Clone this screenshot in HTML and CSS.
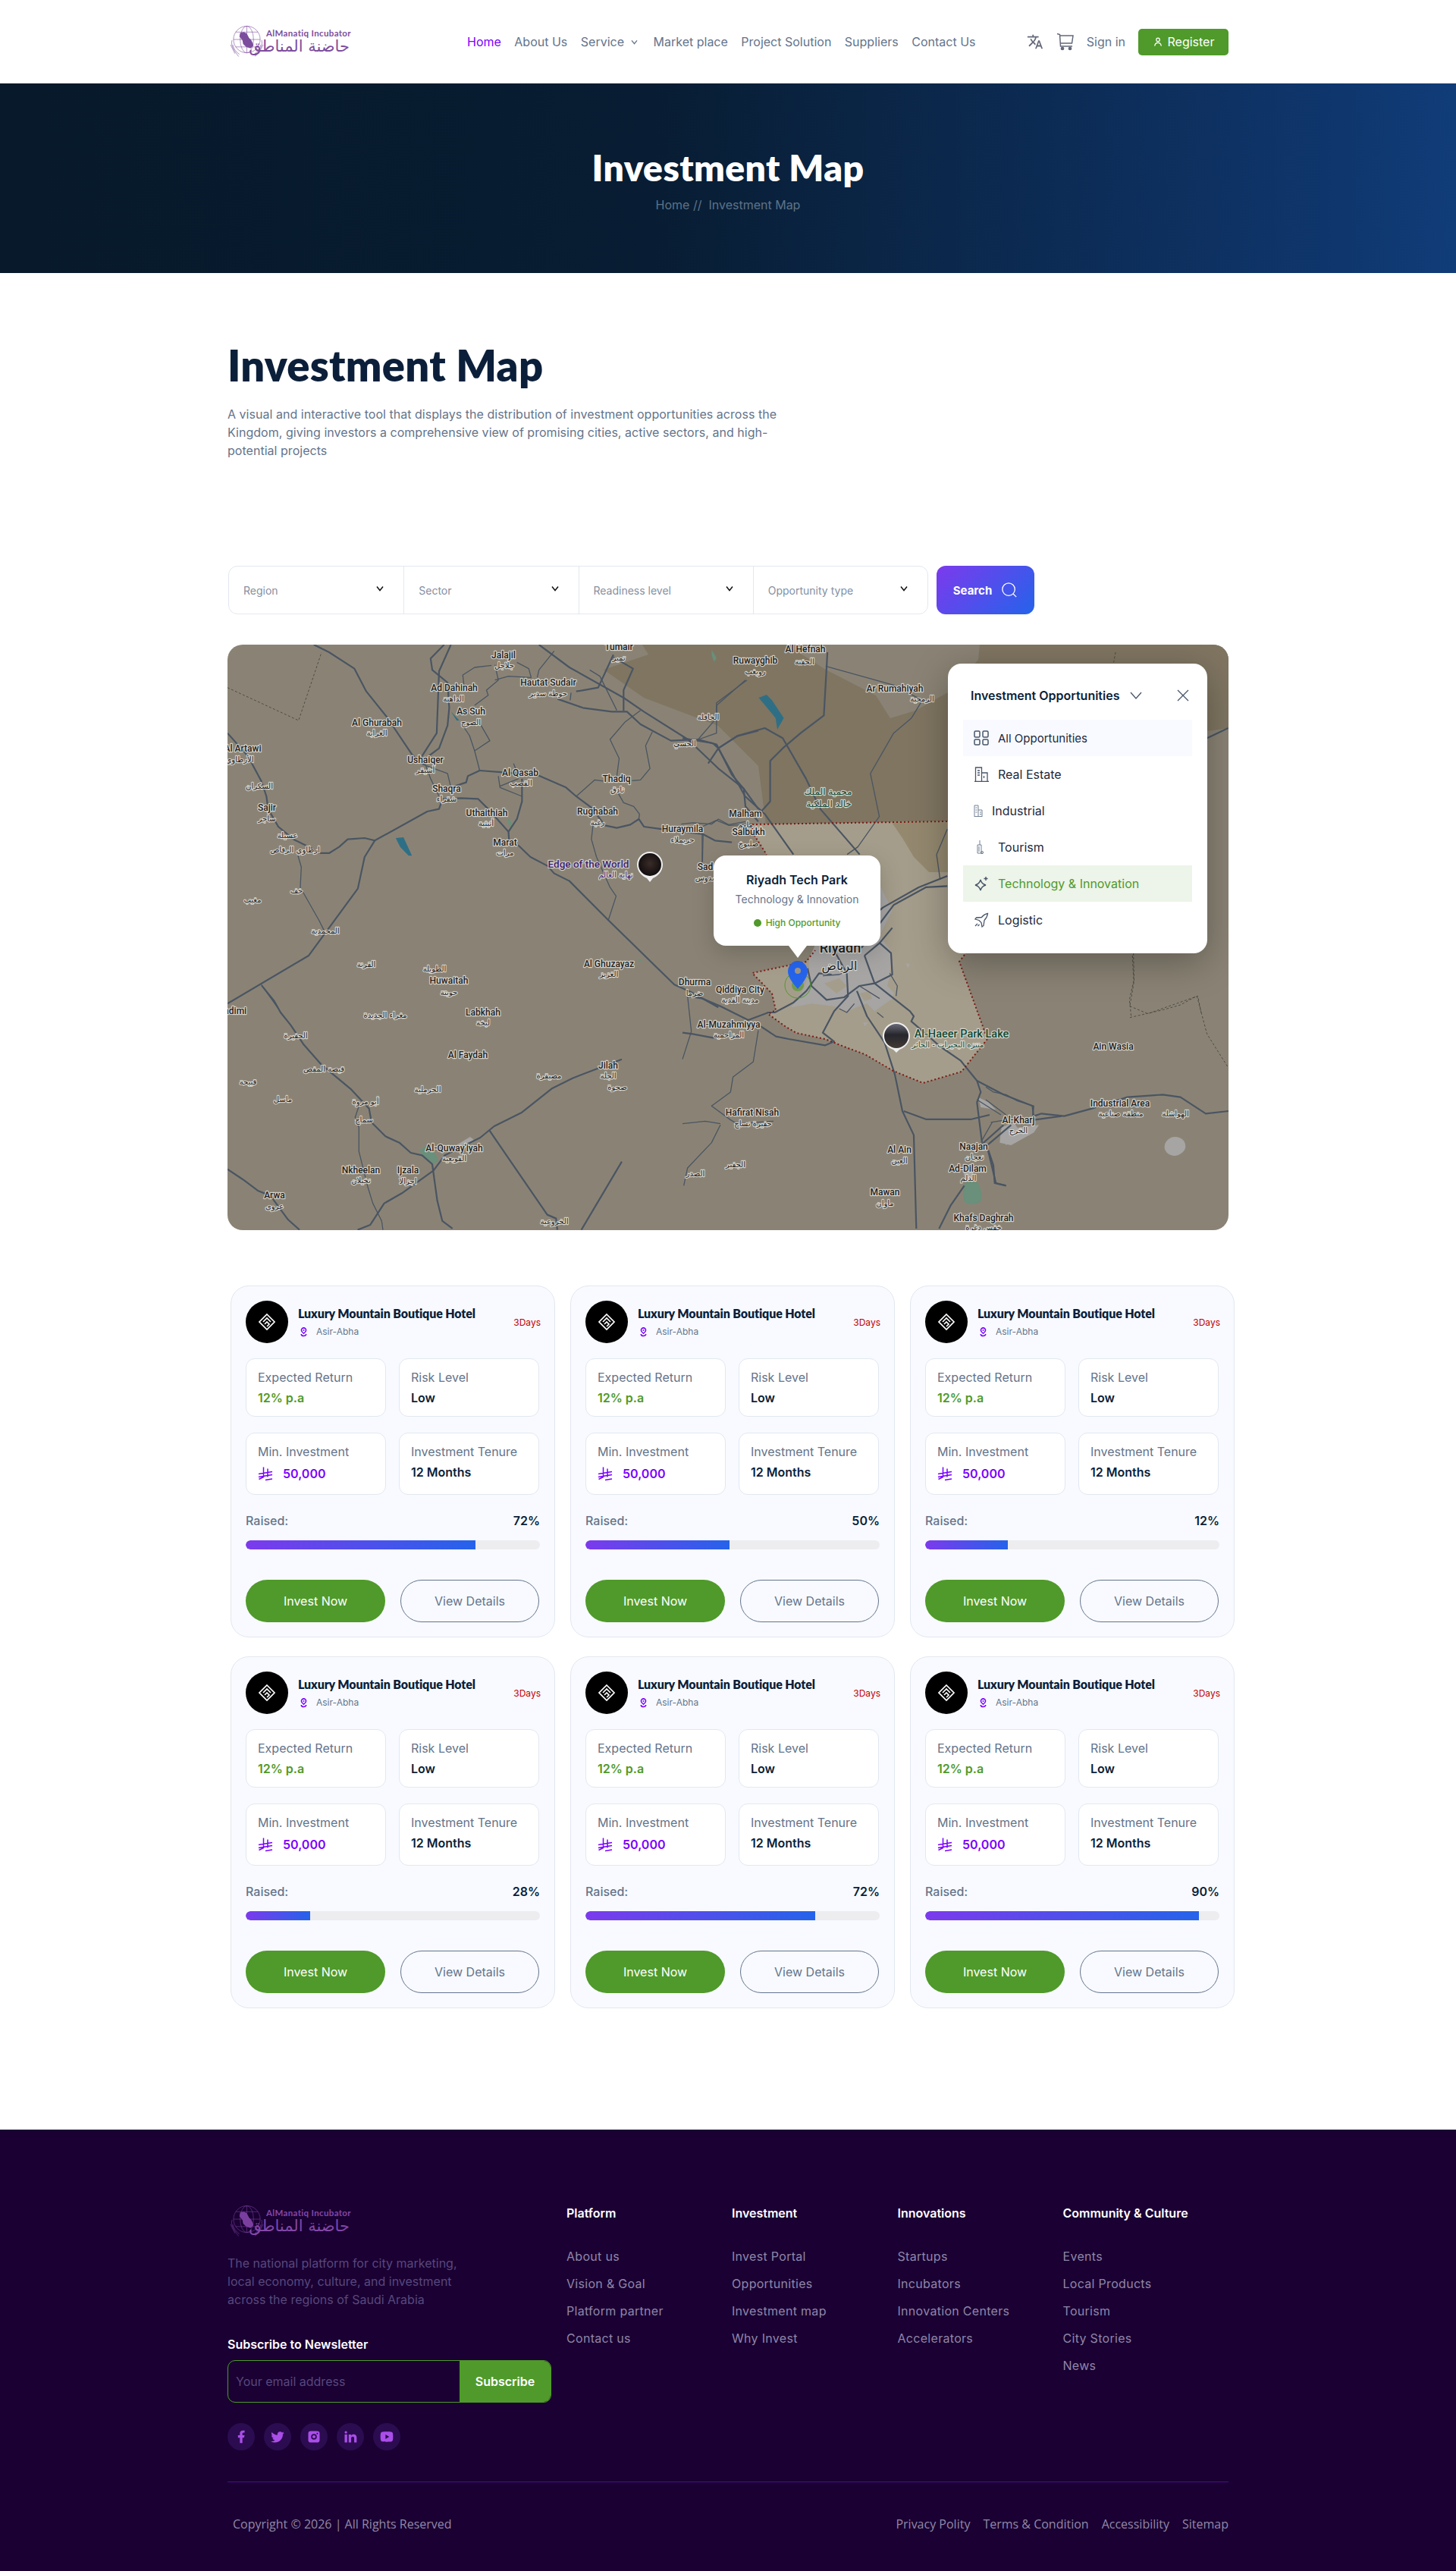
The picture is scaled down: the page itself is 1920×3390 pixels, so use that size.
FILE: index.html
```html
<!DOCTYPE html>
<html lang="en">
<head>
<meta charset="utf-8">
<title>Investment Map</title>
<link rel="stylesheet" href="styles.css">
</head>
<body>
<svg class="defs" width="0" height="0" aria-hidden="true">
  <symbol id="logo-mark" viewBox="0 0 46 44">
    <g fill="none" stroke="currentColor" stroke-width=".6">
      <circle cx="23" cy="19" r="18"/>
      <ellipse cx="23" cy="19" rx="9" ry="18"/>
      <path d="M23 1v36M5 19h36M8 9h30M8 29h30"/>
      <path d="M3 20c-2 8 3 14 9 22M4 26c1 6 5 10 9 13M43 20c2 8-3 14-9 22M42 26c-1 6-5 10-9 13M1 26l6 12M45 26l-6 12"/>
    </g>
    <path fill="currentColor" d="M14 10l5-1 4 2 3 6 3 3 2 4 1 3-4 4-6-2-4-4-1-5-4-5z"/>
  </symbol>
  <symbol id="card-mark" viewBox="0 0 24 24">
    <g fill="none" stroke="#fff" stroke-width="1.7">
      <path d="M12 2l10 10-10 10L2 12z"/>
      <path d="M7 12l5-5 5 5M9 15l3-3 3 3-3 3"/>
    </g>
  </symbol>
  <symbol id="loc" viewBox="0 0 14 20">
    <path fill="none" stroke="currentColor" stroke-width="2.4" d="M7 2a4.8 4.8 0 0 1 4.8 4.8C11.8 9.5 9 12 7 13.5 5 12 2.2 9.5 2.2 6.8A4.8 4.8 0 0 1 7 2z"/>
    <circle cx="7" cy="6.8" r="1.5" fill="currentColor"/>
    <path fill="none" stroke="currentColor" stroke-width="2.4" d="M2 14.5c0 2.5 2.5 4 5 4s5-1.5 5-4"/>
  </symbol>
  <symbol id="sar" viewBox="0 0 20 20">
    <g fill="none" stroke="currentColor" stroke-width="1.5">
      <path d="M7.5 1v13l-6 3M13 3v11M1 10l18-3M1 14l18-3M10 18l9-1.5"/>
    </g>
  </symbol>
  <symbol id="chev" viewBox="0 0 10 8">
    <path fill="none" stroke="currentColor" stroke-width="1.5" d="M1 1.5l4 5 4-5"/>
  </symbol>
</svg>

<header class="site-header">
  <div class="wrap header-row">
    <a class="logo">
      <svg class="logo-icon"><use href="#logo-mark"/></svg>
      <span class="logo-text"><b>AlManatiq Incubator</b><i>حاضنة المناطق</i></span>
    </a>
    <nav class="main-nav">
      <a class="is-active">Home</a>
      <a>About Us</a>
      <a class="has-caret">Service <svg class="caret"><use href="#chev"/></svg></a>
      <a>Market place</a>
      <a>Project Solution</a>
      <a>Suppliers</a>
      <a>Contact Us</a>
    </nav>
    <div class="header-tools">
      <svg class="tool-icon" viewBox="0 0 24 24" fill="#64687a"><path d="M12.87 15.07l-2.54-2.51.03-.03A17.52 17.52 0 0 0 14.07 6H17V4h-7V2H8v2H1v2h11.17C11.5 7.92 10.44 9.75 9 11.35 8.07 10.32 7.3 9.19 6.69 8h-2c.73 1.63 1.73 3.17 2.98 4.56l-5.09 5.02L4 19l5-5 3.11 3.11.76-2.04zM18.5 10h-2L12 22h2l1.12-3h4.75L21 22h2l-4.5-12zm-2.62 7l1.62-4.33L19.12 17h-3.24z"/></svg>
      <svg class="tool-icon cart" viewBox="0 0 24 24" fill="none" stroke="#64687a" stroke-width="1.5"><path d="M1 1.5l3.5 1 1 15.5h15.5M5 4h17l-1.500 10H5.500"/><circle cx="8" cy="21" r="1.600" fill="#64687a"/><circle cx="18" cy="21" r="1.600" fill="#64687a"/></svg>
      <a class="signin">Sign in</a>
      <a class="register"><svg class="reg-icon" viewBox="0 0 16 16" fill="none" stroke="#fff" stroke-width="1.4"><circle cx="8" cy="5" r="2.6"/><path d="M3 14.5c.5-3.5 2.5-5 5-5s4.5 1.5 5 5"/></svg>Register</a>
    </div>
  </div>
</header>

<section class="hero">
  <h1 class="hero-title">Investment Map</h1>
  <p class="crumbs">Home //&nbsp; Investment Map</p>
</section>

<main class="wrap page-main">
  <section class="intro">
    <h2 class="intro-title">Investment Map</h2>
    <p class="intro-text">A visual and interactive tool that displays the distribution of investment opportunities across the Kingdom, giving investors a comprehensive view of promising cities, active sectors, and high-potential projects</p>
  </section>

  <form class="filters">
    <div class="filter-bar">
      <div class="filter"><span>Region</span><svg class="f-chev"><use href="#chev"/></svg></div>
      <div class="filter"><span>Sector</span><svg class="f-chev"><use href="#chev"/></svg></div>
      <div class="filter"><span>Readiness level</span><svg class="f-chev"><use href="#chev"/></svg></div>
      <div class="filter"><span>Opportunity type</span><svg class="f-chev"><use href="#chev"/></svg></div>
    </div>
    <button class="search-btn" type="button">Search
      <svg class="search-icon" viewBox="0 0 24 24" fill="none" stroke="#fff" stroke-width="1.4"><circle cx="11" cy="11" r="9"/><path d="M17.5 17.5l4.5 4.5"/></svg>
    </button>
  </form>

  <section class="map">
    <svg class="map-art" viewBox="0 0 1320 772" preserveAspectRatio="none">
      <rect width="1320" height="772" class="land"/>
      <path class="brown" d="M547 0L555 13 496 33 549 70 647 107 700 160 710 237 950 233 960 160 1320 110V0z"/>
      <path class="land" d="M737 0H992L990 20 950 63 907 87 874 97 855 67 789 33z"/>
      <path class="tan" d="M692 237L949 233 975 240 975 405 965 418 1002 520 968 563 917 578 878 562 840 540 813 530 788 520 750 512 735 503 713 487 723 482 718 460 692 433 763 418 775 403 770 380 720 300 711 277 692 247z"/>
      <path class="tan2" d="M875 233L949 233 950 300 925 300 905 280 890 255z"/>
      <g transform="translate(600 370) scale(.3333)">
        <path class="city" d="M530 70L600 -40 720 -80 780 -160 830 -60 780 40 830 110 820 190 850 230 830 290 760 340 730 310 700 320 650 340 600 320 510 310 430 325 480 250 500 190 500 130z"/>
        <path class="tan" d="M560 230l60-20 30 30-40 30zM820 200l30 30-10 40-30-30zM700 270l40-10 10 30-30 10z"/>
        <path class="city" d="M885 150l15 5-10 15zM715 385l20 0-15 15zM1170 680l40 20 30 30-60-10zM1110 970l40-10 0 50-30 5zM1260 800l50-20 30 40-60 50z"/>
      </g>
      <g transform="translate(1000 400) scale(.3333)">
        <path class="city" d="M60 720L210 700 190 730 100 780 55 770z"/>
        <path class="city" d="M748 747c25 0 42 15 42 38 0 22-30 38-45 37-22-1-40-18-38-38 2-20 20-37 41-37z"/>
      </g>
      <path class="green" d="M972 710c8-3 14-3 18 0 4 8 6 20 3 24-6 5-17 5-21 1-2-6-2-18 0-25z"/>
      <g transform="translate(0 440) scale(.3333)">
        <path class="green" d="M760 680l30-20 30 30 15 30-20 15-45-35z"/>
        <path class="city" d="M905 660l25-15 30-18 15 12-40 35-25 10z"/>
      </g>
      <g transform="scale(.4464 .3333)">
        <path class="water" d="M497 765l23-3 12 35 13 38-10 0-25-35z"/>
        <path class="green" d="M830 685l12 25-8 12-6-20zM1430 20l14 30-8 15-6-25zM1213 1243l12 3-8 11z"/>
        <path class="water" d="M660 265l25 35-8 0z"/>
        <path class="dash" d="M0 170L210 300 278 30"/>
        <g class="major">
          <path d="M255 0L300 30 375 95 410 185 470 285 545 435 580 475"/>
          <path d="M660 0L625 105 618 350 575 440"/>
          <path d="M640 0L600 55 605 100 650 150 655 250 650 320 625 410 595 440"/>
          <path d="M920 0L1010 90 1170 210 1230 265 1360 375 1450 490 1525 570 1568 650"/>
          <path d="M1140 40L1095 170 1030 185M1140 50L1198 95 1170 180 1170 262"/>
          <path d="M975 215L1050 250 1135 265 1180 265 1220 315 1310 380 1390 375 1445 395 1490 515 1525 570 1530 640 1568 700"/>
          <path d="M1568 340L1505 362 1450 410 1420 470"/>
          <path d="M745 498L815 505 920 518 1000 565 1030 600 1075 645 1115 715 1150 725 1190 712 1215 690 1230 720 1285 730 1405 750 1440 775 1490 782"/>
          <path d="M745 498L710 520 705 545 660 565"/>
          <path d="M0 350L60 440 100 540 115 600 120 650 150 720 195 770 240 800 270 825 300 825 330 800 355 770 405 765 435 775 590 660 625 650 635 610 690 607 740 610 770 650 830 740"/>
          <path d="M435 775L405 840 385 965 240 1230 0 1420"/>
          <path d="M870 530L870 620 855 690 830 740 832 780 860 795 895 840 945 875 965 905 1010 935 1125 1090 1320 1345 1370 1375 1450 1435"/>
        </g>
        <g class="minor">
          <path d="M580 475L610 490 650 510 660 565M575 440L600 530 625 600"/>
          <path d="M745 498L730 420 715 360 700 330M730 420L775 380 745 310"/>
          <path d="M205 820L218 880 215 960 270 1090 285 1130M100 1345L150 1440"/>
          <path d="M1255 345L1235 400 1248 490 1220 535 1195 538M1220 260L1175 305 1130 375 1157 450 1150 520"/>
          <path d="M1030 600L1085 535 1110 540M1155 590L1170 625 1200 640 1217 670 1215 690"/>
          <path d="M790 80L800 140 765 180 770 200 730 240M700 180L695 120 730 90 780 82M855 70L890 95 897 130 830 125 790 140M965 25L920 100 915 130M1012 220L1015 190"/>
          <path d="M790 680L830 740M845 470L860 520M800 520L805 565 870 600M805 560L860 530"/>
          <path d="M1080 710L1075 770 1090 840 1130 960 1148 995 1125 1090"/>
          <path d="M1405 750L1403 860M1340 710L1375 705 1430 710 1450 690 1480 712 1530 700"/>
          <path d="M1070 100L1100 125 1150 260M1530 140L1445 240 1445 290 1390 375"/>
        </g>
      </g>
      <g transform="translate(600 10) scale(.4719 .3333)">
        <path class="water" d="M213 180L235 168 250 190 283 260 265 305 260 260z"/>
        <path class="green" d="M85 0L95 25 88 38z"/>
        <path class="dash" d="M1210 0L1205 40M1260 1190L1262 1300 1250 1400M1250 1400L1300 1430 1440 1360 1450 1430"/>
        <g class="major">
          <path d="M405 0L395 250 330 320 280 380 245 430 245 590 220 630"/>
          <path d="M0 340L85 360 100 380 175 570 230 640 310 800M100 380L155 330 230 300 280 340 345 500 385 620 495 800"/>
          <path d="M740 885L660 930 560 1010 520 1060M740 925L680 930 590 1000 500 1170"/>
          <path d="M1525 300L1466 340"/>
        </g>
        <g class="minor">
          <path d="M180 110L95 200 95 320 45 345"/>
          <path d="M400 55L590 130 670 190 640 260 590 320 525 480 550 650 490 770 460 800"/>
          <path d="M55 850V690L95 665 130 685 200 680"/>
          <path d="M740 700L710 800 720 900"/>
        </g>
      </g>
      <g transform="translate(600 370) scale(.3333)">
        <g class="major">
          <path d="M335 345L365 345 440 305 490 260 540 190 590 195"/>
          <path d="M495 170L510 240 570 295 640 285 700 240 760 230 830 195 825 110 780 70 720 120"/>
          <path d="M720 120L760 230 900 340 915 360 905 380 1020 480 1100 535 1165 615 1180 660 1165 700 1185 860"/>
          <path d="M690 260L730 360 800 465 840 590 870 735 915 830 925 1200"/>
          <path d="M650 190L655 280 600 340 555 425 600 460 565 475 420 450 370 440 310 400"/>
          <path d="M0 425L40 430 120 445 175 430M20 280L80 290 150 320 260 375 340 345"/>
          <path d="M875 735L965 768 1140 768 1215 750M1165 615L1270 670 1385 715 1390 770 1500 755"/>
          <path d="M1270 790L1180 870M1205 875L1240 1020 1280 1030M1115 1030L1060 1110 1015 1200"/>
          <path d="M600 100L650 190M780 70L830 10"/>
        </g>
        <g class="minor">
          <path d="M20 280L35 420 0 530M300 415L280 540 200 600 190 660 115 715 190 770 215 785 360 775M0 785L90 775 150 785"/>
          <path d="M150 790L115 860 20 960 5 1030M1165 690L1260 750M1225 780L1185 850"/>
          <path d="M555 200L620 195 680 170M620 330L650 345 680 310M700 240L780 290M770 345L795 365M820 190L850 240 845 280"/>
        </g>
      </g>
      <g transform="translate(0 440) scale(.3333)">
        <g class="major">
          <path d="M135 28L185 90 210 135 250 185 300 260 370 340 490 440 560 515 570 570 625 625 680 650 725 690 770 700 810 735 830 880 850 960 890 990"/>
          <path d="M1560 320L1365 395 1285 435 1165 530 1055 585 1000 630 860 700 815 760 690 850 620 890 565 975 515 995"/>
          <path d="M1035 600L1265 935 1300 950 1305 995M1560 725L1400 995M0 755L60 795 120 840 170 860 240 955 285 995"/>
        </g>
        <g class="minor">
          <path d="M520 505L505 550 520 590 520 685 555 825 575 890 610 960 615 995"/>
        </g>
      </g>
      <g transform="translate(1000 400) scale(.3333)">
        <path class="dash" d="M580 30L585 130 568 205 575 270M570 275L700 245 770 225 835 190 875 340 960 475"/>
        <g class="major">
          <path d="M190 665L220 655 310 665 420 635 560 590 700 580 770 590 870 655 960 645"/>
          <path d="M10 800L30 860 35 930 80 940M0 785L100 700"/>
        </g>
        <g class="minor">
          <path d="M0 550L30 570 80 580 125 605 190 625 185 665M0 600L80 660M20 690L80 680"/>
        </g>
      </g>
      <path class="border" d="M692 237L949 233M975 405L965 418 1002 520 968 563 917 578 878 562 840 540 813 530 788 520 750 512 735 503 713 487 723 482 718 460 692 433 763 418 775 403M692 237L692 247 711 277"/>

      <g class="labels">
        <text x="364" y="18">Jalajil</text><text class="ar" x="365" y="31">جلاجل</text>
        <text x="516" y="7">Tumair</text><text class="ar" x="516" y="21">تمير</text>
        <text x="696" y="25">Ruwayghib</text><text class="ar" x="696" y="39">رويغب</text>
        <text x="762" y="10">Al Hefnah</text><text class="ar" x="761" y="26">الحفنة</text>
        <text x="880" y="62">Ar Rumahiyah</text><text class="ar" x="916" y="75">الرمحية</text>
        <text class="ar" x="634" y="99">الخافلة</text>
        <text class="ar" x="603" y="134">الحسي</text>
        <text x="299" y="61">Ad Dahinah</text><text class="ar" x="298" y="75">الداهنة</text>
        <text x="423" y="54">Hautat Sudair</text><text class="ar" x="423" y="68">حوطة سدير</text>
        <text x="321" y="92">As Suh</text><text class="ar" x="321" y="106">الصوح</text>
        <text x="197" y="107">Al Ghurabah</text><text class="ar" x="197" y="120">الغرابة</text>
        <text x="20" y="141" class="tight">Al Artawi</text><text class="ar" x="16" y="155">الأرطاوي</text>
        <text x="261" y="156">Ushaiqer</text><text class="ar" x="261" y="169">أشيقر</text>
        <text class="ar" x="42" y="190">السكران</text>
        <text x="386" y="173">Al Qasab</text><text class="ar" x="387" y="186">القصب</text>
        <text x="513" y="181">Thadiq</text><text class="ar" x="514" y="195">ثادق</text>
        <text x="289" y="194">Shaqra</text><text class="ar" x="289" y="207">شقراء</text>
        <text x="52" y="219">Sajir</text><text class="ar" x="52" y="233">ساجر</text>
        <text x="342" y="226">Uthaithiah</text><text class="ar" x="341" y="239">أثيثية</text>
        <text x="488" y="224">Rughabah</text><text class="ar" x="488" y="238">رغبة</text>
        <text x="683" y="227">Malham</text><text class="ar" x="683" y="241">ملهم</text>
        <text x="600" y="247">Huraymila</text><text class="ar" x="600" y="261">حريملاء</text>
        <text x="687" y="251">Salbukh</text><text class="ar" x="687" y="266">صلبوخ</text>
        <text x="366" y="265">Marat</text><text class="ar" x="366" y="278">مرات</text>
        <text class="ar" x="79" y="255">عسيلة</text><text class="ar" x="89" y="274">ارطاوي الرقاص</text>
        <text class="edge" x="476" y="294">Edge of the World</text><text class="ar edge-ar" x="512" y="307">نهاية العالم</text>
        <text x="630" y="297">Sad</text><text class="ar" x="632" y="311">سدوس</text>
        <text class="ar" x="91" y="328">خف</text><text class="ar" x="33" y="340">مغيب</text>
        <text class="ar" x="129" y="381">المحمدية</text><text class="ar" x="183" y="425">القرنة</text><text class="ar" x="273" y="431">الطويلة</text>
        <text x="292" y="447">Huwaitah</text><text class="ar" x="292" y="462">حويتة</text>
        <text x="503" y="425">Al Ghuzayaz</text><text class="ar" x="503" y="438">الغزيز</text>
        <text x="616" y="449">Dhurma</text><text class="ar" x="616" y="463">ضرما</text>
        <text x="676" y="459">Qiddiya City</text><text class="ar" x="676" y="472">مدينة القدية</text>
        <text class="big" x="808" y="406">Riyadh</text><text class="big-ar" x="807" y="429">الرياض</text>
        <text x="661" y="505">Al-Muzahmiyya</text><text class="ar" x="661" y="518">المزاحمية</text>
        <text x="692" y="621">Hafirat Nisah</text><text class="ar" x="693" y="635">حفيرة نساح</text>
        <text class="haeer" x="968" y="518">Al-Haeer Park Lake</text><text class="ar haeer-ar" x="950" y="531">متنزه البحيرات - الحائر</text>
        <text x="1043" y="631">Al-Kharj</text><text class="ar" x="1043" y="644">الخرج</text>
        <text x="984" y="666">Naajan</text><text class="ar" x="985" y="679">نعجان</text>
        <text x="886" y="670">Al Ain</text><text class="ar" x="886" y="684">العين</text>
        <text x="976" y="695">Ad-Dilam</text><text class="ar" x="977" y="707">الدلم</text>
        <text x="867" y="726">Mawan</text><text class="ar" x="867" y="740">ماوان</text>
        <text x="997" y="760">Khafs Daghrah</text><text class="ar" x="997" y="772">خفس دغرة</text>
        <text class="ar" x="670" y="689">الجفير</text><text class="ar" x="617" y="701">الصدر</text>
        <text x="337" y="489">Labkhah</text><text class="ar" x="337" y="502">لبخة</text>
        <text x="317" y="545">Al Faydah</text>
        <text class="ar" x="208" y="492">مغراء الجديدة</text><text class="ar" x="90" y="519">الحفيرة</text><text class="ar" x="127" y="563">قيصة المفص</text>
        <text class="ar" x="27" y="580">قبيحة</text><text class="ar" x="73" y="603">ماسل</text><text class="ar" x="182" y="606">أبو مروة</text>
        <text class="ar" x="180" y="630">سماح</text><text class="ar" x="264" y="590">الحرملية</text>
        <text x="502" y="559">Jilah</text><text class="ar" x="502" y="572">الجلة</text><text class="ar" x="424" y="572">مصيقرة</text>
        <text x="299" y="668">Al-Quway'iyah</text><text class="ar" x="299" y="681">القويعية</text>
        <text x="176" y="697">Nkheelan</text><text class="ar" x="176" y="710">نخيلان</text>
        <text x="238" y="697">Ijzala</text><text class="ar" x="238" y="711">اجزالا</text>
        <text x="62" y="730">Arwa</text><text class="ar" x="62" y="744">عروى</text>
        <text class="ar" x="431" y="764">الخروعية</text><text x="6" y="487">Nadimi</text>
        <text class="ar" x="514" y="587">صحوة</text>
        <text x="1168" y="534">Ain Wasia</text>
        <text x="1177" y="609">Industrial Area</text><text class="ar" x="1178" y="622">منطقة صناعية</text><text class="ar" x="1250" y="622">الهواشلة</text>
        <text class="ar green-ar" x="792" y="198">محمية الملك</text><text class="ar green-ar" x="793" y="214">خالد الملكية</text>
      </g>

      <defs>
        <radialGradient id="photo1" cx=".5" cy=".45" r=".6"><stop offset="0" stop-color="#3a2c28"/><stop offset="1" stop-color="#0d0a0c"/></radialGradient>
        <linearGradient id="photo2" x1="0" y1="0" x2="0" y2="1"><stop offset="0" stop-color="#6a6a78"/><stop offset=".45" stop-color="#26262c"/><stop offset="1" stop-color="#423a34"/></linearGradient>
      </defs>
      <g class="place">
        <path d="M557 273c10 0 17 8 17 17 0 10-8 16-13 18l-4 5-4-5c-5-2-13-8-13-18 0-9 7-17 17-17z"/>
        <circle cx="557" cy="290" r="15" fill="url(#photo1)"/>
      </g>
      <g class="place">
        <path d="M882 498c10 0 18 8 18 18 0 10-8 16-14 18l-4 4-4-4c-6-2-14-8-14-18 0-10 8-18 18-18z"/>
        <circle cx="882" cy="516" r="16" fill="url(#photo2)"/>
      </g>
      <circle class="pin-ring" cx="752" cy="449" r="17"/>
      <circle class="pin-core" cx="752" cy="449" r="8"/>
      <path class="pin" d="M752 417c7 0 13 6 13 14 0 8-8 17-13 23-5-6-13-15-13-23 0-8 6-14 13-14z"/>
      <circle class="pin-eye" cx="752" cy="430" r="4"/>
    </svg>

    <div class="popup">
      <h4 class="popup-title">Riyadh Tech Park</h4>
      <p class="popup-sub">Technology &amp; Innovation</p>
      <p class="popup-tag"><i></i>High Opportunity</p>
    </div>

    <aside class="panel">
      <div class="panel-head">
        <strong>Investment Opportunities</strong>
        <svg class="panel-chev" viewBox="0 0 16 10" fill="none" stroke="#475569" stroke-width="1.3"><path d="M1 1l7 8 7-8"/></svg>
        <svg class="panel-x" viewBox="0 0 16 16" fill="none" stroke="#475569" stroke-width="1.3"><path d="M1 1l14 14M15 1L1 15"/></svg>
      </div>
      <ul class="panel-list">
        <li class="row is-all"><svg class="ic" viewBox="0 0 20 20" fill="none" stroke="#475569" stroke-width="1.5"><rect x="1" y="1" width="7" height="8" rx="1.5"/><rect x="12" y="1" width="7" height="8" rx="1.5"/><rect x="1" y="12" width="7" height="7" rx="1.5"/><rect x="12" y="12" width="7" height="7" rx="1.5"/></svg>All Opportunities</li>
        <li class="row"><svg class="ic" viewBox="0 0 20 20" fill="none" stroke="#475569" stroke-width="1.3"><path d="M1 19.5h19M2.5 19V1h8v18M10.5 8H18v11M5 5h3M5 8h3M5 11h3M13.5 12v3"/></svg>Real Estate</li>
        <li class="row"><svg class="ic small" viewBox="0 0 12 16" fill="none" stroke="#64748b" stroke-width=".9"><path d="M.5 15.5h11M1 15V1h5v14M6 7h5v8M2.5 4h2M2.5 7h2M2.5 10h2M8 10h2M8 12.5h2"/></svg>Industrial</li>
        <li class="row"><svg class="ic" viewBox="0 0 20 20" fill="none" stroke="#64748b" stroke-width=".9"><path d="M5 18V7h5v11M8 7V1M5 18h7"/><circle cx="11" cy="17" r="1.6"/><path d="M7 9v7"/></svg>Tourism</li>
        <li class="row is-on"><svg class="ic" viewBox="0 0 20 20" fill="none" stroke="#475569" stroke-width="1.4"><path d="M9 5c1 4 3 6 7 7-4 1-6 3-7 7-1-4-3-6-7-7 4-1 6-3 7-7z"/><path d="M16 1v5M13.5 3.5h5"/></svg>Technology &amp; Innovation</li>
        <li class="row"><svg class="ic" viewBox="0 0 20 20" fill="none" stroke="#475569" stroke-width="1.3"><path d="M18.5 1.5c-3 .5-6 2.5-8 5l-7 .5-1.5 2 5 1.5 3 3 1 5.5 2-1.5 1-7c2.5-2.5 4-5.5 4.5-9zM5 15l-3 3M7.5 16l-2 2"/></svg>Logistic</li>
      </ul>
    </aside>
  </section>

  <section class="cards">
    <article class="card">
      <div class="card-head">
        <span class="card-logo"><svg class="card-mark"><use href="#card-mark"/></svg></span>
        <div class="card-name"><h3>Luxury Mountain Boutique Hotel</h3><p><svg class="loc"><use href="#loc"/></svg>Asir-Abha</p></div>
        <span class="days">3Days</span>
      </div>
      <div class="stats">
        <div class="stat"><span>Expected Return</span><b class="is-green">12% p.a</b></div>
        <div class="stat"><span>Risk Level</span><b>Low</b></div>
        <div class="stat"><span>Min. Investment</span><b class="price"><svg class="sar"><use href="#sar"/></svg>50,000</b></div>
        <div class="stat"><span>Investment Tenure</span><b>12 Months</b></div>
      </div>
      <div class="raised"><span>Raised:</span><b>72%</b></div>
      <div class="bar"><i style="width:78%"></i></div>
      <div class="actions"><a class="btn-invest">Invest Now</a><a class="btn-view">View Details</a></div>
    </article>
    <article class="card">
      <div class="card-head">
        <span class="card-logo"><svg class="card-mark"><use href="#card-mark"/></svg></span>
        <div class="card-name"><h3>Luxury Mountain Boutique Hotel</h3><p><svg class="loc"><use href="#loc"/></svg>Asir-Abha</p></div>
        <span class="days">3Days</span>
      </div>
      <div class="stats">
        <div class="stat"><span>Expected Return</span><b class="is-green">12% p.a</b></div>
        <div class="stat"><span>Risk Level</span><b>Low</b></div>
        <div class="stat"><span>Min. Investment</span><b class="price"><svg class="sar"><use href="#sar"/></svg>50,000</b></div>
        <div class="stat"><span>Investment Tenure</span><b>12 Months</b></div>
      </div>
      <div class="raised"><span>Raised:</span><b>50%</b></div>
      <div class="bar"><i style="width:49%"></i></div>
      <div class="actions"><a class="btn-invest">Invest Now</a><a class="btn-view">View Details</a></div>
    </article>
    <article class="card">
      <div class="card-head">
        <span class="card-logo"><svg class="card-mark"><use href="#card-mark"/></svg></span>
        <div class="card-name"><h3>Luxury Mountain Boutique Hotel</h3><p><svg class="loc"><use href="#loc"/></svg>Asir-Abha</p></div>
        <span class="days">3Days</span>
      </div>
      <div class="stats">
        <div class="stat"><span>Expected Return</span><b class="is-green">12% p.a</b></div>
        <div class="stat"><span>Risk Level</span><b>Low</b></div>
        <div class="stat"><span>Min. Investment</span><b class="price"><svg class="sar"><use href="#sar"/></svg>50,000</b></div>
        <div class="stat"><span>Investment Tenure</span><b>12 Months</b></div>
      </div>
      <div class="raised"><span>Raised:</span><b>12%</b></div>
      <div class="bar"><i style="width:28%"></i></div>
      <div class="actions"><a class="btn-invest">Invest Now</a><a class="btn-view">View Details</a></div>
    </article>
    <article class="card">
      <div class="card-head">
        <span class="card-logo"><svg class="card-mark"><use href="#card-mark"/></svg></span>
        <div class="card-name"><h3>Luxury Mountain Boutique Hotel</h3><p><svg class="loc"><use href="#loc"/></svg>Asir-Abha</p></div>
        <span class="days">3Days</span>
      </div>
      <div class="stats">
        <div class="stat"><span>Expected Return</span><b class="is-green">12% p.a</b></div>
        <div class="stat"><span>Risk Level</span><b>Low</b></div>
        <div class="stat"><span>Min. Investment</span><b class="price"><svg class="sar"><use href="#sar"/></svg>50,000</b></div>
        <div class="stat"><span>Investment Tenure</span><b>12 Months</b></div>
      </div>
      <div class="raised"><span>Raised:</span><b>28%</b></div>
      <div class="bar"><i style="width:22%"></i></div>
      <div class="actions"><a class="btn-invest">Invest Now</a><a class="btn-view">View Details</a></div>
    </article>
    <article class="card">
      <div class="card-head">
        <span class="card-logo"><svg class="card-mark"><use href="#card-mark"/></svg></span>
        <div class="card-name"><h3>Luxury Mountain Boutique Hotel</h3><p><svg class="loc"><use href="#loc"/></svg>Asir-Abha</p></div>
        <span class="days">3Days</span>
      </div>
      <div class="stats">
        <div class="stat"><span>Expected Return</span><b class="is-green">12% p.a</b></div>
        <div class="stat"><span>Risk Level</span><b>Low</b></div>
        <div class="stat"><span>Min. Investment</span><b class="price"><svg class="sar"><use href="#sar"/></svg>50,000</b></div>
        <div class="stat"><span>Investment Tenure</span><b>12 Months</b></div>
      </div>
      <div class="raised"><span>Raised:</span><b>72%</b></div>
      <div class="bar"><i style="width:78%"></i></div>
      <div class="actions"><a class="btn-invest">Invest Now</a><a class="btn-view">View Details</a></div>
    </article>
    <article class="card">
      <div class="card-head">
        <span class="card-logo"><svg class="card-mark"><use href="#card-mark"/></svg></span>
        <div class="card-name"><h3>Luxury Mountain Boutique Hotel</h3><p><svg class="loc"><use href="#loc"/></svg>Asir-Abha</p></div>
        <span class="days">3Days</span>
      </div>
      <div class="stats">
        <div class="stat"><span>Expected Return</span><b class="is-green">12% p.a</b></div>
        <div class="stat"><span>Risk Level</span><b>Low</b></div>
        <div class="stat"><span>Min. Investment</span><b class="price"><svg class="sar"><use href="#sar"/></svg>50,000</b></div>
        <div class="stat"><span>Investment Tenure</span><b>12 Months</b></div>
      </div>
      <div class="raised"><span>Raised:</span><b>90%</b></div>
      <div class="bar"><i style="width:93%"></i></div>
      <div class="actions"><a class="btn-invest">Invest Now</a><a class="btn-view">View Details</a></div>
    </article>
  </section>
</main>

<footer class="site-footer">
  <div class="wrap">
    <div class="footer-top">
      <div class="footer-brand">
        <a class="logo logo-dark">
          <svg class="logo-icon"><use href="#logo-mark"/></svg>
          <span class="logo-text"><b>AlManatiq Incubator</b><i>حاضنة المناطق</i></span>
        </a>
        <p class="footer-about">The national platform for city marketing, local economy, culture, and investment across the regions of Saudi Arabia</p>
        <h5 class="news-title">Subscribe to Newsletter</h5>
        <div class="news-form"><span>Your email address</span><a>Subscribe</a></div>
        <div class="socials">
          <a><svg viewBox="0 0 24 24"><path d="M14 13.5h2.5l1-4H14v-2c0-1.03 0-2 2-2h1.5V2.14c-.326-.043-1.557-.14-2.857-.14C11.928 2 10 3.657 10 6.7v2.8H7v4h3V22h4v-8.5z"/></svg></a>
          <a><svg viewBox="0 0 24 24"><path d="M22.46 6c-.77.35-1.6.58-2.46.69.88-.53 1.56-1.37 1.88-2.38-.83.5-1.75.85-2.72 1.05C18.37 4.5 17.26 4 16 4c-2.35 0-4.27 1.92-4.27 4.29 0 .34.04.67.11.98C8.28 9.09 5.11 7.38 3 4.79c-.37.63-.58 1.37-.58 2.15 0 1.49.75 2.81 1.91 3.56-.71 0-1.37-.2-1.95-.5v.03c0 2.08 1.48 3.82 3.44 4.21a4.22 4.22 0 0 1-1.93.07 4.28 4.28 0 0 0 4 2.98 8.521 8.521 0 0 1-5.33 1.84c-.34 0-.68-.02-1.02-.06C3.44 20.29 5.7 21 8.12 21 16 21 20.33 14.46 20.33 8.79c0-.19 0-.37-.01-.56.84-.6 1.56-1.36 2.14-2.23z"/></svg></a>
          <a><svg viewBox="0 0 24 24"><path fill-rule="evenodd" d="M7 3h10a4 4 0 0 1 4 4v10a4 4 0 0 1-4 4H7a4 4 0 0 1-4-4V7a4 4 0 0 1 4-4zm5 4.5a4.5 4.5 0 1 0 0 9 4.5 4.5 0 0 0 0-9zm0 2a2.5 2.5 0 1 1 0 5 2.5 2.5 0 0 1 0-5zM17.2 5.6a1.2 1.2 0 1 0 0 2.4 1.2 1.2 0 0 0 0-2.4z"/></svg></a>
          <a><svg viewBox="0 0 24 24"><path d="M6.94 5a2 2 0 1 1-4-.002 2 2 0 0 1 4 .002zM7 8.48H3V21h4V8.48zm6.32 0H9.34V21h3.94v-6.57c0-3.66 4.77-4 4.77 0V21H22v-7.93c0-6.17-7.06-5.94-8.72-2.91l.04-1.68z"/></svg></a>
          <a><svg viewBox="0 0 24 24"><path d="M21.543 6.498C22 8.28 22 12 22 12s0 3.72-.457 5.502c-.254.985-.997 1.76-1.938 2.022C17.896 20 12 20 12 20s-5.893 0-7.605-.476c-.945-.266-1.687-1.04-1.938-2.022C2 15.72 2 12 2 12s0-3.72.457-5.502c.254-.985.997-1.76 1.938-2.022C6.107 4 12 4 12 4s5.896 0 7.605.476c.945.266 1.687 1.04 1.938 2.022zM10 15.5l6-3.5-6-3.5v7z"/></svg></a>
        </div>
      </div>
      <div class="footer-cols">
        <div class="f-col"><h6>Platform</h6><a>About us</a><a>Vision &amp; Goal</a><a>Platform partner</a><a>Contact us</a></div>
        <div class="f-col"><h6>Investment</h6><a>Invest Portal</a><a>Opportunities</a><a>Investment map</a><a>Why Invest</a></div>
        <div class="f-col"><h6>Innovations</h6><a>Startups</a><a>Incubators</a><a>Innovation Centers</a><a>Accelerators</a></div>
        <div class="f-col"><h6>Community &amp; Culture</h6><a>Events</a><a>Local Products</a><a>Tourism</a><a>City Stories</a><a>News</a></div>
      </div>
    </div>
    <div class="footer-bottom">
      <span class="copy">Copyright © 2026 | All Rights Reserved</span>
      <div class="legal"><a>Privacy Polity</a><a>Terms &amp; Condition</a><a>Accessibility</a><a>Sitemap</a></div>
    </div>
  </div>
</footer>
</body>
</html>
```
FILE: styles.css
```css
* { box-sizing: border-box; }
html, body { margin: 0; padding: 0; }
body { font-family: Inter, "Noto Sans", sans-serif; background: #fff; color: #0b1f3a; }
h1, h2, h3, h4, h5, h6, p, ul { margin: 0; padding: 0; }
ul { list-style: none; }
a { color: inherit; text-decoration: none; }
.defs { position: absolute; }
.wrap { width: 1320px; margin: 0 auto; }

/* header */
.site-header { height: 110px; background: #fff; }
.header-row { height: 110px; display: flex; align-items: center; }
.logo { display: flex; align-items: center; gap: 3px; width: 316px; padding-left: 3px; color: #7d4d9d; }
.logo-icon { width: 45px; height: 44px; flex: none; color: #7d4d9d; }
.logo-text { display: flex; flex-direction: column; line-height: 1; width: 110px; }
.logo-text b { font: 700 11.5px/13px Lato, sans-serif; letter-spacing: .35px; white-space: nowrap; }
.logo-text i { font: 400 21px/23px "DejaVu Sans", sans-serif; white-space: nowrap; direction: rtl; text-align: center; letter-spacing: .6px; }
.main-nav { display: flex; align-items: center; gap: 17.5px; font-size: 16px; color: #64748b; white-space: nowrap; }
.main-nav .is-active { color: #7c00ff; }
.has-caret { display: flex; align-items: center; gap: 9px; margin-right: 3px; }
.caret { width: 9px; height: 7px; color: #64748b; }
.header-tools { margin-left: auto; display: flex; align-items: center; font-size: 16px; color: #64748b; }
.tool-icon { width: 22px; height: 22px; margin-right: 17px; }
.cart { width: 24px; height: 24px; margin-right: 16px; }
.signin { margin-right: 17px; }
.register { width: 119px; height: 35px; background: #4f9a2a; color: #fff; border-radius: 5px; display: flex; align-items: center; justify-content: center; gap: 6px; }
.reg-icon { width: 14px; height: 14px; }

/* hero */
.hero { height: 250px; background: linear-gradient(90deg, #07192a 0%, #081d33 45%, #0e3264 85%, #103c78 100%); text-align: center; padding-top: 82px; }
.hero-title { font: 800 48px/58px Lato, sans-serif; color: #fff; letter-spacing: .4px; }
.crumbs { margin-top: 8px; font-size: 16px; line-height: 24px; color: #5d7388; }

/* intro */
.page-main { padding-bottom: 160px; }
.intro { padding-top: 88px; width: 740px; }
.intro-title { font: 800 56px/68px Lato, sans-serif; color: #0b1f3a; letter-spacing: .3px; }
.intro-text { margin-top: 18px; font-size: 16px; line-height: 24px; letter-spacing: .03px; color: #64748b; }

/* filters */
.filters { display: flex; align-items: stretch; gap: 11px; margin-top: 140px; }
.filter-bar { width: 923px; height: 64px; margin-left: 1px; display: grid; grid-template-columns: repeat(4, 1fr); border: 1px solid #e2e8f0; border-radius: 12px; }
.filter { display: flex; align-items: center; justify-content: space-between; padding: 0 26px 0 19px; border-left: 1px solid #e2e8f0; font-size: 14px; color: #8490a3; }
.filter:first-child { border-left: 0; }
.f-chev { width: 10px; height: 8px; color: #111; margin-top: -4px; }
.search-btn { width: 129px; height: 64px; border: 0; border-radius: 12px; background: linear-gradient(135deg, #7c3aed, #2563eb); color: #fff; font: 700 15px Inter, sans-serif; display: flex; align-items: center; justify-content: center; gap: 12px; padding: 0; }
.search-icon { width: 22px; height: 22px; }

/* map */
.map { position: relative; height: 772px; margin-top: 40px; border-radius: 20px; overflow: hidden; }
.map-art { display: block; width: 1320px; height: 772px; }
.land { fill: #8a8375; }
.brown { fill: #7f7561; }
.tan { fill: #a59d8b; }
.tan2 { fill: #94896f; }
.city { fill: #a6a5a4; }
.green { fill: #6a8f7a; }
.water { fill: #2f6f85; }
.major path { fill: none; stroke: #4a5563; stroke-width: 2.2; vector-effect: non-scaling-stroke; stroke-linejoin: round; }
.minor path { fill: none; stroke: #4a5563; stroke-width: 1.3; vector-effect: non-scaling-stroke; stroke-linejoin: round; }
.dash { fill: none; stroke: #4f4c45; stroke-width: 1; stroke-dasharray: 3 2.5; vector-effect: non-scaling-stroke; }
.border { fill: none; stroke: #7d1a14; stroke-width: 2; stroke-dasharray: 2 3; }
.labels text { font: 500 12px Roboto, "DejaVu Sans", sans-serif; fill: #1f1f1f; text-anchor: middle; paint-order: stroke; stroke: rgba(235, 232, 225, .75); stroke-width: 2.4px; stroke-linejoin: round; }
.labels .ar { font: 400 10px "DejaVu Sans", sans-serif; }
.labels .big { font-size: 18px; font-weight: 500; }
.labels .big-ar { font: 400 16px "DejaVu Sans", sans-serif; }
.labels .edge { font-size: 13.5px; fill: #3e1e6e; }
.labels .edge-ar { fill: #3e1e6e; }
.labels .haeer { font-size: 14.5px; fill: #0f4a35; }
.labels .haeer-ar, .labels .green-ar { fill: #0f4a35; }
.labels .green-ar { font-size: 12px; }
.place path { fill: #efefef; }
.pin-ring { fill: none; stroke: #4f9a2a; stroke-width: 1; }
.pin-core { fill: #6f9a50; }
.pin { fill: #2563eb; }
.pin-eye { fill: #9c9484; }

.popup { position: absolute; left: 641px; top: 278px; width: 220px; height: 119px; background: #fff; border-radius: 16px; text-align: center; padding-top: 20px; box-shadow: 0 10px 30px rgba(0, 0, 0, .18); }
.popup::after { content: ""; position: absolute; left: 99px; top: 119px; border: 12px solid transparent; border-top: 16px solid #fff; border-bottom: 0; }
.popup-title { font-size: 16px; font-weight: 600; line-height: 24px; color: #0b1f3a; }
.popup-sub { margin-top: 4px; font-size: 14px; line-height: 20px; color: #64748b; }
.popup-tag { margin-top: 11px; font-size: 12px; font-weight: 500; line-height: 20px; color: #4f9a2a; display: flex; align-items: center; justify-content: center; gap: 6px; }
.popup-tag i { width: 10px; height: 10px; border-radius: 50%; background: #4f9a2a; }

.panel { position: absolute; left: 950px; top: 25px; width: 342px; height: 382px; background: #fff; border-radius: 18px; padding: 0 20px; box-shadow: 0 12px 50px rgba(0, 0, 0, .3); }
.panel-head { height: 74px; display: flex; align-items: center; padding: 10px 4px 0 10px; }
.panel-head strong { font-size: 16px; font-weight: 600; color: #0b1f3a; white-space: nowrap; }
.panel-chev { width: 16px; height: 10px; margin-left: 14px; }
.panel-x { width: 16px; height: 16px; margin-left: auto; }
.row { height: 48px; display: flex; align-items: center; gap: 12px; padding-left: 14px; font-size: 16px; color: #1e293b; }
.row.is-all { background: #f8faff; font-size: 15px; }
.row.is-on { background: #edf4e9; color: #4f9a2a; }
.ic { width: 20px; height: 20px; flex: none; }
.ic.small { width: 12px; height: 16px; }

/* cards */
.cards { display: grid; grid-template-columns: repeat(3, 428px); gap: 25px 20px; margin: 73px 0 0 4px; }
.card { height: 464px; padding: 19px 19px 0; border: 1px solid #e2e8f0; border-radius: 24px; background: #f8faff; }
.card-head { display: flex; align-items: center; height: 56px; margin-bottom: 20px; }
.card-logo { width: 56px; height: 56px; flex: none; border-radius: 50%; background: #000; display: flex; align-items: center; justify-content: center; }
.card-mark { width: 24px; height: 24px; }
.card-name { margin-left: 13px; flex: 1; }
.card-name h3 { font: 800 16px/20px Lato, sans-serif; color: #0b1f3a; white-space: nowrap; letter-spacing: -.12px; }
.card-name p { display: flex; align-items: center; gap: 12px; margin-top: 6px; font-size: 12px; line-height: 16px; color: #64748b; padding-left: 3px; }
.loc { width: 9px; height: 14px; color: #7c00ff; }
.days { font-size: 12px; color: #c40000; margin-right: -1px; }
.stats { display: grid; grid-template-columns: 185px 185px; gap: 21px 17px; }
.stat { display: flex; flex-direction: column; gap: 5px; padding: 13px 15px; background: #fff; border: 1px solid #e2e8f0; border-radius: 12px; }
.stat span { font-size: 16px; line-height: 22px; color: #64748b; white-space: nowrap; }
.stat b { font-size: 16px; line-height: 22px; font-weight: 600; color: #0b1f3a; white-space: nowrap; }
.stat .is-green { color: #4f9a2a; }
.stat .price { color: #7c00ff; display: flex; align-items: center; gap: 13px; line-height: 27px; }
.sar { width: 20px; height: 21px; color: #7c00ff; }
.raised { display: flex; justify-content: space-between; margin-top: 23px; font-size: 16px; line-height: 22px; color: #64748b; font-weight: 500; }
.raised b { font-weight: 600; color: #0b1f3a; }
.bar { height: 12px; margin-top: 15px; border-radius: 6px; background: #ededf0; overflow: hidden; }
.bar i { display: block; height: 100%; border-radius: 6px 0 0 6px; background: linear-gradient(90deg, #7c3aed, #2563eb); }
.actions { display: grid; grid-template-columns: 184px 183px; gap: 20px; margin-top: 40px; }
.actions a { height: 56px; border-radius: 28px; display: flex; align-items: center; justify-content: center; font-size: 16px; }
.btn-invest { background: #4f9a2a; color: #fff; }
.btn-view { border: 1px solid #64748b; color: #64748b; }

/* footer */
.site-footer { height: 582px; background: #1a0033; }
.footer-top { height: 464px; display: flex; padding-top: 100px; }
.footer-brand { width: 447px; }
.logo-dark { height: 42px; color: #8347a8; }
.logo-dark .logo-icon { color: #7a3f9e; }
.footer-about { margin-top: 22px; width: 320px; font-size: 16px; line-height: 24px; color: #57487c; }
.news-title { margin-top: 35px; font-size: 16px; line-height: 24px; font-weight: 600; color: #fff; }
.news-form { margin-top: 9px; width: 427px; height: 56px; display: flex; align-items: stretch; border: 1px solid #4f9a2a; border-radius: 10px; overflow: hidden; }
.news-form span { flex: 1; display: flex; align-items: center; padding-left: 10px; font-size: 16px; color: #57487c; }
.news-form a { width: 120px; background: #4f9a2a; color: #fff; font-size: 16px; font-weight: 600; display: flex; align-items: center; justify-content: center; }
.socials { display: flex; gap: 12px; margin-top: 27px; }
.socials a { width: 36px; height: 36px; border-radius: 50%; background: #2c0c50; display: flex; align-items: center; justify-content: center; }
.socials svg { width: 20px; height: 20px; fill: #a94ee8; }
.footer-cols { display: grid; grid-template-columns: 218px 218.5px 218px auto; }
.f-col { display: flex; flex-direction: column; }
.f-col h6 { font-size: 16px; line-height: 24px; font-weight: 600; color: #fff; margin: -2px 0 27px; white-space: nowrap; }
.f-col a { font: 400 16px/36px Inter, sans-serif; letter-spacing: .3px; color: #8f86a8; white-space: nowrap; }
.footer-bottom { display: flex; justify-content: space-between; align-items: center; height: 118px; padding: 0 0 8px 7px; border-top: 1px solid #4c0d8f; font: 400 16px/24px "Open Sans", sans-serif; color: #9089a6; }
.legal { display: flex; gap: 17px; }
```
